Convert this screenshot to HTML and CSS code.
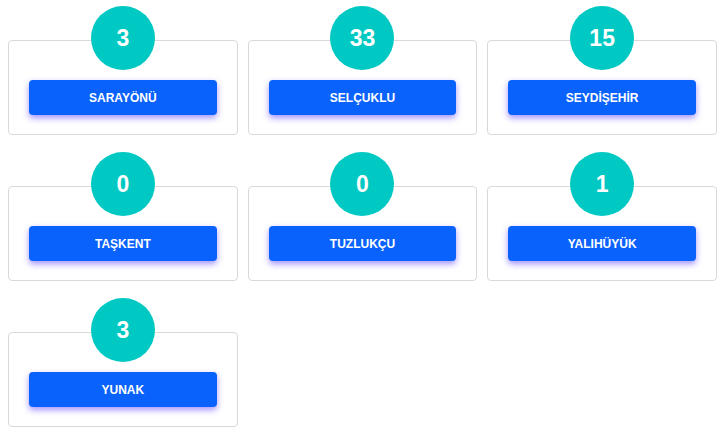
FILE: index.html
```html
<!DOCTYPE html>
<html lang="tr">
<head>
<meta charset="utf-8">
<title>İlçeler</title>
<link rel="stylesheet" href="styles.css">
</head>
<body>
<div class="grid">
  <div class="card"><div class="count">3</div><a class="btn">SARAYÖNÜ</a></div>
  <div class="card"><div class="count">33</div><a class="btn">SELÇUKLU</a></div>
  <div class="card"><div class="count">15</div><a class="btn">SEYDİŞEHİR</a></div>
  <div class="card"><div class="count">0</div><a class="btn">TAŞKENT</a></div>
  <div class="card"><div class="count">0</div><a class="btn">TUZLUKÇU</a></div>
  <div class="card"><div class="count">1</div><a class="btn">YALIHÜYÜK</a></div>
  <div class="card"><div class="count">3</div><a class="btn">YUNAK</a></div>
</div>
</body>
</html>
```
FILE: styles.css
```css
html, body {
  margin: 0;
  background: #ffffff;
}
body {
  padding: 6px 8px 0 8px;
  font-family: "Liberation Sans", Arial, sans-serif;
}
.grid {
  display: grid;
  grid-template-columns: repeat(3, 1fr);
  column-gap: 10px;
  row-gap: 17px;
}
.card {
  margin-top: 34px;
  height: 95px;
  box-sizing: border-box;
  border: 1px solid #d9d9d9;
  border-radius: 4px;
  display: flex;
  flex-direction: column;
  align-items: stretch;
  padding: 0 20px;
}
.count {
  align-self: center;
  width: 64px;
  height: 64px;
  margin-top: -35px;
  border-radius: 50%;
  background: #00c8c2;
  color: #ffffff;
  font-weight: bold;
  font-size: 23px;
  display: flex;
  align-items: center;
  justify-content: center;
}
.btn {
  margin-top: 10px;
  height: 35px;
  border-radius: 4px;
  background: #0a62fc;
  color: #ffffff;
  font-family: "Liberation Sans", Arial, sans-serif;
  font-weight: bold;
  font-size: 12px;
  padding-top: 1px;
  box-sizing: border-box;
  display: flex;
  align-items: center;
  justify-content: center;
  box-shadow: 0 3px 6px rgba(85, 60, 255, 0.55);
  cursor: pointer;
}
```
